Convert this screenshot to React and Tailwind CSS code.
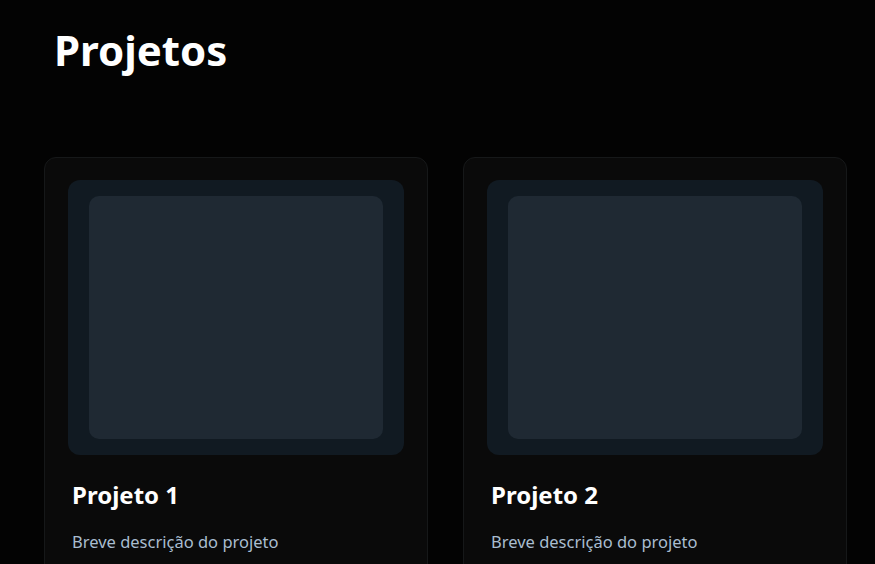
import React from "react";

const projects = [
  { id: 1, title: "Projeto 1", desc: "Breve descrição do projeto" },
  { id: 2, title: "Projeto 2", desc: "Breve descrição do projeto" }
];

function ProjectCard({ title, desc }) {
  return <div className="rounded-xl border border-[#161819] bg-[#0a0a0a] px-[23px] pt-[22px] pb-10">
    <div className="h-[275px] rounded-xl bg-[#111a22] px-[21px] py-4">
      <div className="h-full rounded-[10px] bg-[#1f2933]"></div>
    </div>
    <h3 className="mt-[24px] pl-[4px] text-2xl font-bold text-white">{title}</h3>
    <p className="mt-[19px] pl-[4px] text-[16.5px] text-[#a9bdd0]">{desc}</p>
  </div>;
}

export default function App() {
  return <div className="min-h-screen overflow-hidden bg-[#030303] font-['Noto_Sans',sans-serif]">
    <div className="pl-[44px] pt-[24px]">
      <h1 className="pl-[10px] text-[42px] font-bold leading-tight text-white">Projetos</h1>
      <div className="mt-[80px] grid grid-cols-[384px_384px] gap-[35px]">
        {projects.map((p) => <ProjectCard key={p.id} title={p.title} desc={p.desc} />)}
      </div>
    </div>
  </div>;
}
